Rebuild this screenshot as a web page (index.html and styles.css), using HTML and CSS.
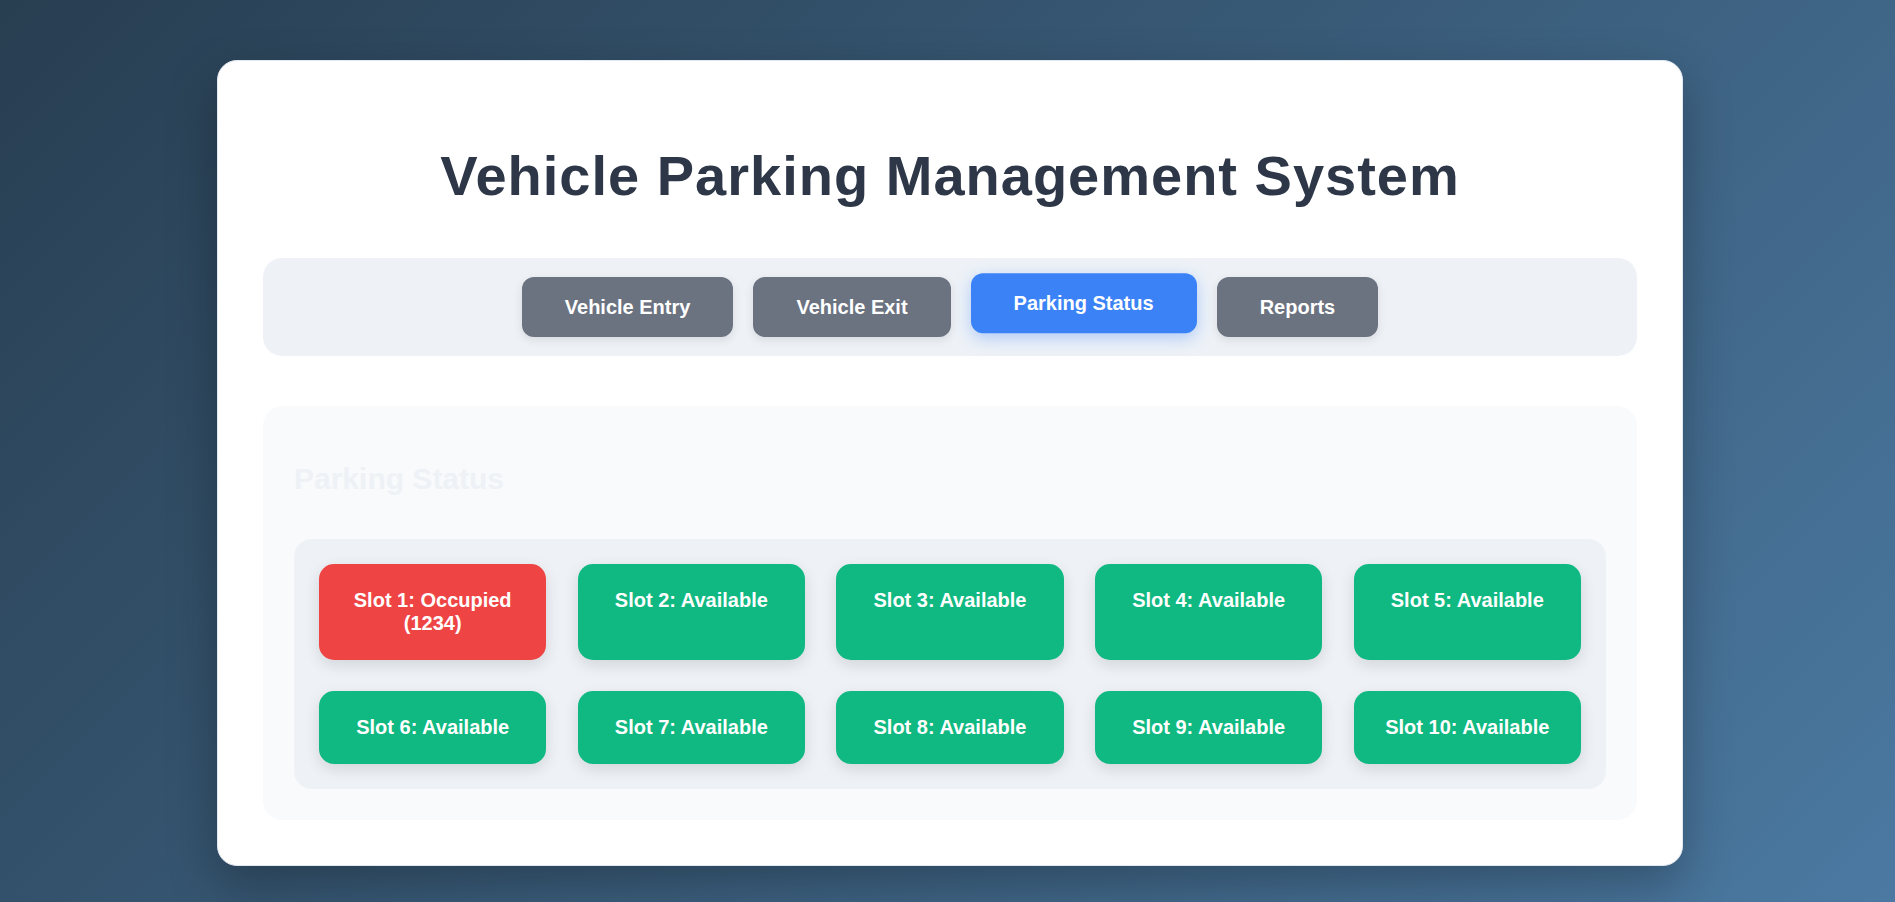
FILE: index.html
```html
<!DOCTYPE html>
<html lang="en">
<head>
<meta charset="utf-8">
<title>Vehicle Parking Management System</title>
<link rel="stylesheet" href="styles.css">
</head>
<body>
  <div class="card">
    <h1 class="title">Vehicle Parking Management System</h1>
    <nav class="nav">
      <button class="nav-btn">Vehicle Entry</button>
      <button class="nav-btn">Vehicle Exit</button>
      <button class="nav-btn active">Parking Status</button>
      <button class="nav-btn">Reports</button>
    </nav>
    <section class="panel">
      <h2 class="panel-title">Parking Status</h2>
      <div class="slots">
        <div class="slot occupied">Slot 1: Occupied (1234)</div>
        <div class="slot">Slot 2: Available</div>
        <div class="slot">Slot 3: Available</div>
        <div class="slot">Slot 4: Available</div>
        <div class="slot">Slot 5: Available</div>
        <div class="slot">Slot 6: Available</div>
        <div class="slot">Slot 7: Available</div>
        <div class="slot">Slot 8: Available</div>
        <div class="slot">Slot 9: Available</div>
        <div class="slot">Slot 10: Available</div>
      </div>
    </section>
  </div>
</body>
</html>
```
FILE: styles.css
```css
* { box-sizing: border-box; }

html, body { height: 100%; }

body {
  margin: 0;
  padding: 60px 212px 0 217px;
  min-height: 100vh;
  font-family: "Liberation Sans", Arial, sans-serif;
  background: linear-gradient(135deg, #283e51 0%, #4b79a1 100%);
  overflow: hidden;
}

.card {
  background: #ffffff;
  border: 1px solid #e2e8f0;
  border-radius: 20px;
  padding: 45px;
  box-shadow: 0 20px 50px rgba(0, 0, 0, 0.28);
}

.title {
  margin: 38px 0 50px;
  font-size: 56px;
  line-height: 64px;
  font-weight: 700;
  letter-spacing: 1px;
  color: #2d3748;
  text-align: center;
}

.nav {
  display: flex;
  justify-content: center;
  align-items: center;
  gap: 20px;
  padding: 19px;
  background: #eef2f7;
  border-radius: 19px;
}

.nav-btn {
  font-family: "Liberation Sans", Arial, sans-serif;
  font-size: 20px;
  font-weight: 700;
  line-height: 23px;
  color: #ffffff;
  background: #6b7280;
  border: none;
  border-radius: 12px;
  padding: 18.5px 43px;
  box-shadow: 0 3px 10px rgba(0, 0, 0, 0.1);
  cursor: pointer;
}

.nav-btn.active {
  background: #3b82f6;
  transform: translateY(-3.75px);
  box-shadow: 0 5px 16px rgba(59, 130, 246, 0.35);
}

.panel {
  margin-top: 50px;
  background: #f8fafc;
  border-radius: 20px;
  padding: 31px;
}

.panel-title {
  margin: 25px 0 43px;
  font-size: 30px;
  line-height: 34px;
  font-weight: 700;
  color: #eef2f6;
}

.slots {
  display: grid;
  grid-template-columns: repeat(5, 1fr);
  gap: 31.25px;
  padding: 25px;
  background: #eef2f7;
  border-radius: 18px;
}

.slot {
  background: #10b981;
  color: #ffffff;
  font-size: 20px;
  font-weight: 700;
  line-height: 23px;
  text-align: center;
  padding: 25px;
  border-radius: 15px;
  box-shadow: 0 5px 15px rgba(0, 0, 0, 0.12);
}

.slot.occupied {
  background: #ef4444;
}
```
